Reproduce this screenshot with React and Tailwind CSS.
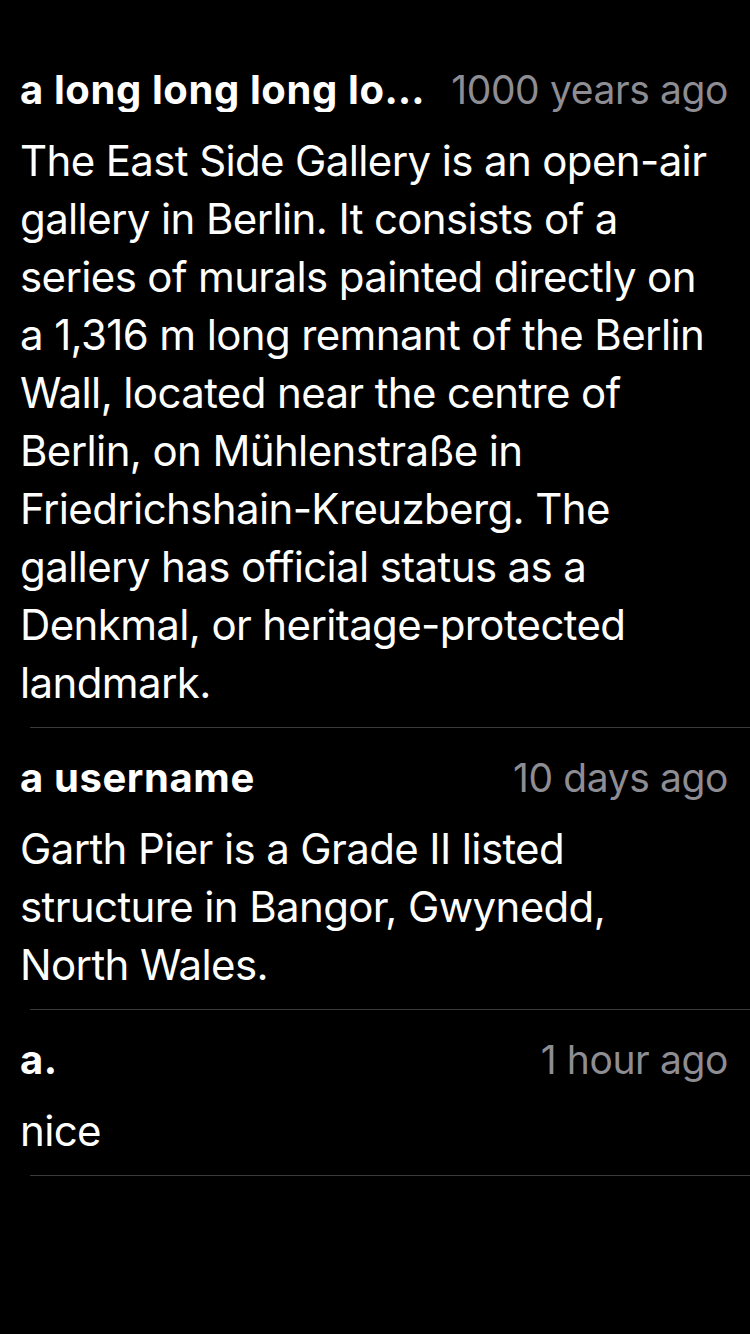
const COMMENTS = [
  {
    id: 1,
    username: 'a long long long long long long username',
    time: '1000 years ago',
    body:
      'The East Side Gallery is an open-air gallery in Berlin. It consists of a series of murals painted directly on a 1,316 m long remnant of the Berlin Wall, located near the centre of Berlin, on Mühlenstraße in Friedrichshain-Kreuzberg. The gallery has official status as a Denkmal, or heritage-protected landmark.',
  },
  {
    id: 2,
    username: 'a username',
    time: '10 days ago',
    body: 'Garth Pier is a Grade II listed structure in Bangor, Gwynedd, North Wales.',
  },
  {
    id: 3,
    username: 'a.',
    time: '1 hour ago',
    body: 'nice',
  },
];

function CommentRow({ c }) {
  return (
    <div className="relative pl-[20px] pr-[22px] pt-[28px] pb-[16px]">
      <div className="flex items-center gap-[22px] leading-[44px]">
        <span className="min-w-0 flex-1 truncate text-[40px] font-bold tracking-[0.015em] text-white">{c.username}</span>
        <span className="shrink-0 text-[39px] tracking-[-0.01em] text-[#8d8d93]">{c.time}</span>
      </div>
      <p className="mt-[20px] pr-[10px] text-[42px] leading-[58px] tracking-[-0.015em] text-white">{c.body}</p>
      {/* séparateur décalé à gauche, comme sur iOS */}
      <div className="absolute bottom-0 left-[30px] right-0 h-px bg-[#3a3a3c]" />
    </div>
  );
}

export default function App() {
  return (
    <div className="min-h-[1334px] w-[750px] bg-black pt-[40px] font-['Inter','Liberation_Sans',sans-serif] antialiased">
      {COMMENTS.map((c) => (
        <CommentRow key={c.id} c={c} />
      ))}
    </div>
  );
}
